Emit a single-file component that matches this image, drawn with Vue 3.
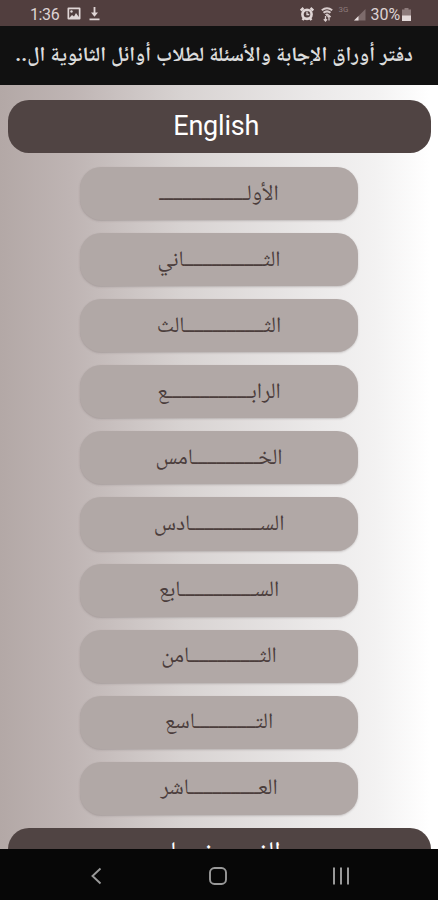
<template>
  <div class="screen">
    <header class="status-bar">
      <div class="status-left">
        <span class="clock">1:36</span>
        <svg class="photo-icon" width="14" height="14" viewBox="0 0 14 14">
          <path fill="#e0d6d6" fill-rule="evenodd" d="M1.500 .5h11a1 1 0 0 1 1 1v10a1 1 0 0 1-1 1h-11a1 1 0 0 1-1-1v-10a1 1 0 0 1 1-1zM2.200 2.200v8.800l2.800-3 2 1.500 2-3.500 2.800 4V2.200z" />
          <circle cx="4.500" cy="4.500" r="1.200" fill="#e0d6d6" />
        </svg>
        <svg class="download-icon" width="11" height="14" viewBox="0 0 11 14">
          <path fill="#e0d6d6" d="M4.600 0h1.800v5.500H9L5.500 9.800 2 5.500h2.600zM.5 11.600h10v1.600H.5z" />
        </svg>
      </div>
      <div class="status-right">
        <svg width="14" height="14" viewBox="0 0 14 14">
          <path d="M.8 3.500 3.500 1M13.200 3.500 10.500 1M2.500 13l1.800-2M11.500 13l-1.800-2" stroke="#e0d6d6" stroke-width="2.400" />
          <circle cx="7" cy="7.300" r="4.600" fill="none" stroke="#e0d6d6" stroke-width="2.600" />
          <path d="M7 4.500v3h2.300" fill="none" stroke="#e0d6d6" stroke-width="1.300" />
        </svg>
        <svg class="wifi-icon" width="12" height="15" viewBox="0 0 12 15">
          <path d="M.8 3.300Q6-.8 11.200 3.300M2.500 5.800Q6 3 9.500 5.800" fill="none" stroke="#d8cccc" stroke-width="2" />
          <path d="M4 7.200q2-1.200 4 0L6 9.500z" fill="#d8cccc" />
          <path d="M4.500 9v5M8 8.500v5M2.800 12.300l1.700 1.700 1.500-1.700M6.500 10 8 8.500 9.700 10" fill="none" stroke="#d8cccc" stroke-width="1.300" />
        </svg>
        <span class="network">3G</span>
        <svg class="signal-icon" width="12" height="13" viewBox="0 0 12 13">
          <path d="M0 12.500 11.500 1v11.500z" fill="#7d6b6b" />
          <path d="M0 12.500 4.500 8v4.500z" fill="#e8dede" />
        </svg>
        <span class="battery-text">30%</span>
        <svg class="battery-icon" width="9" height="13" viewBox="0 0 9 13">
          <path d="M2.500 0h4v1.500H9V9H0V1.500h2.500z" fill="#8d7b7b" />
          <path d="M0 7.500h9V13H0z" fill="#e4dada" />
        </svg>
      </div>
    </header>

    <div class="title-bar" dir="rtl">
      <h1>دفتر أوراق الإجابة والأسئلة لطلاب أوائل الثانوية ال..</h1>
    </div>

    <main class="content">
      <div class="section">English&nbsp;</div>
      <div class="lessons" dir="rtl">
        <button v-for="(item, i) in lessons" :key="i" class="lesson">
          {{ stretch(item) }}
        </button>
      </div>
      <div class="section section-next" dir="rtl">الفيــــــزيـــاء</div>
    </main>

    <nav class="nav-bar">
      <svg width="14" height="20" viewBox="0 0 14 20">
        <path d="M11.500 2.500 3.500 10l8 7.500" fill="none" stroke="#999" stroke-width="1.900" />
      </svg>
      <svg width="20" height="20" viewBox="0 0 20 20">
        <rect x="2" y="2" width="16" height="16" rx="4.500" fill="none" stroke="#999" stroke-width="1.900" />
      </svg>
      <svg width="18" height="20" viewBox="0 0 18 20">
        <path d="M2 1.500v17M9 1.500v17M16 1.500v17" stroke="#999" stroke-width="2" />
      </svg>
    </nav>
  </div>
</template>

<script setup>
// head + stretched line + tail
const lessons = [
  { head: 'الأولـ', line: 18, tail: '' },
  { head: 'الثـ', line: 16, tail: 'اني' },
  { head: 'الثـ', line: 16, tail: 'الث' },
  { head: 'الرابـ', line: 17, tail: 'ع' },
  { head: 'الخـ', line: 13, tail: 'امس' },
  { head: 'السـ', line: 14, tail: 'ادس' },
  { head: 'السـ', line: 15, tail: 'ابع' },
  { head: 'الثـ', line: 14, tail: 'امن' },
  { head: 'التـ', line: 12, tail: 'اسع' },
  { head: 'العـ', line: 14, tail: 'اشر' }
]

const stretch = (item) => item.head + 'ـ'.repeat(item.line) + item.tail
</script>

<style>
body {
  margin: 0;
}
</style>

<style scoped>
.screen {
  display: flex;
  flex-direction: column;
  width: 438px;
  height: 900px;
  overflow: hidden;
  font-family: Roboto, "Noto Naskh Arabic", "Noto Sans Arabic", "DejaVu Sans", sans-serif;
}

.status-bar {
  flex: 0 0 26px;
  display: flex;
  justify-content: space-between;
  box-sizing: border-box;
  padding: 2px 27px 0 30px;
  background: #513e3e;
  color: #ddd3d3;
  font-size: 16px;
}

.status-left,
.status-right {
  display: flex;
  align-items: center;
}

.clock {
  letter-spacing: -0.4px;
}

.photo-icon {
  margin-left: 8px;
}

.download-icon {
  margin-left: 8px;
}

.wifi-icon {
  margin-left: 7px;
}

.network {
  width: 11px;
  margin-left: 6px;
  margin-top: -9px;
  font-size: 8px;
  color: #8d7b7b;
}

.signal-icon {
  margin-left: 4px;
}

.battery-text {
  margin: 0 2px 0 5px;
  letter-spacing: -0.1px;
}

.title-bar {
  flex: 0 0 59px;
  display: flex;
  align-items: center;
  box-sizing: border-box;
  padding: 2px 25px 0 0;
  background: #111;
  color: #dcdcdc;
}

h1 {
  margin: 0;
  font-size: 20.400px;
  font-weight: 700;
  white-space: nowrap;
}

.content {
  flex: 1;
  min-height: 0;
  overflow: hidden;
  box-sizing: border-box;
  padding: 15px 7px 0 8px;
  background: linear-gradient(90deg, #b3a8a6 0%, #bfb5b4 17%, #d8d3d2 42%, #ebe9e9 72%, #f3f2f2 86%, #fff 98%);
}

.section {
  height: 53px;
  border-radius: 21px;
  background: #504443;
  color: #fff;
  font-size: 27px;
  line-height: 52px;
  letter-spacing: -0.2px;
  text-align: center;
}

.section-next {
  line-height: 47px;
  letter-spacing: 0;
}

.lessons {
  display: flex;
  flex-direction: column;
  gap: 13px;
  width: 278px;
  margin: 14px auto 13px 72px;
}

.lesson {
  height: 53.100px;
  padding: 2px 0 0;
  border: 0;
  border-radius: 21px;
  background: #b1a8a6;
  box-shadow: 0 1px 2px rgba(80, 68, 67, 0.25);
  color: #4b3d3c;
  font-family: inherit;
  font-size: 22px;
}

.nav-bar {
  flex: 0 0 51px;
  display: flex;
  align-items: center;
  justify-content: space-between;
  box-sizing: border-box;
  padding: 3px 88px 0 89px;
  background: #070707;
}
</style>
